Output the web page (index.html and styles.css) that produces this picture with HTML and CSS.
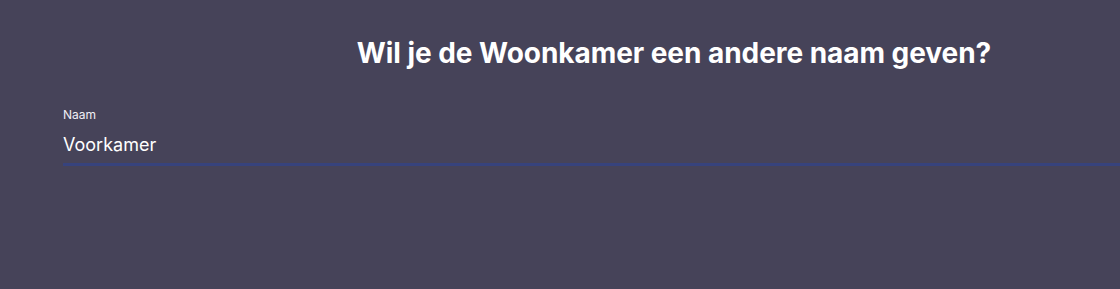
FILE: index.html
```html
<!DOCTYPE html>
<html lang="nl">
<head>
    <meta charset="UTF-8">
    <title>Naam wijzigen</title>
    <link rel="stylesheet" href="styles.css">
</head>
<body>
    <div class="page">
        <h1 class="title">Wil je de Woonkamer een andere naam geven?</h1>
        <div class="field">
            <label class="field-label" for="naam">Naam</label>
            <input id="naam" class="field-input" type="text" value="Voorkamer">
        </div>
    </div>
</body>
</html>
```

FILE: styles.css
```css
* {
    box-sizing: border-box;
    font-family: 'Inter', 'Noto Sans', sans-serif;
}

html, body {
    margin: 0;
    padding: 0;
    background-color: #464359;
    color: #fff;
    overflow: hidden;
}

.page {
    padding: 36px 0 0 63px;
}

.title {
    margin: 0;
    padding-left: 165px; /* centre sits a bit right, as in the app */
    text-align: center;
    font-size: 28px;
    font-weight: 700;
    line-height: 34px;
    letter-spacing: -0.05px;
}

.field {
    margin-top: 38px;
}

.field-label {
    display: block;
    font-size: 12px;
    line-height: 14px;
    color: #f0eff5;
}

.field-input {
    display: block;
    width: 100%;
    margin-top: 11px;
    padding: 0 0 6px;
    background: transparent;
    border: none;
    border-bottom: 3px solid #37437d;
    color: #fff;
    font-size: 18px;
    line-height: 24px;
    outline: none;
}
```
